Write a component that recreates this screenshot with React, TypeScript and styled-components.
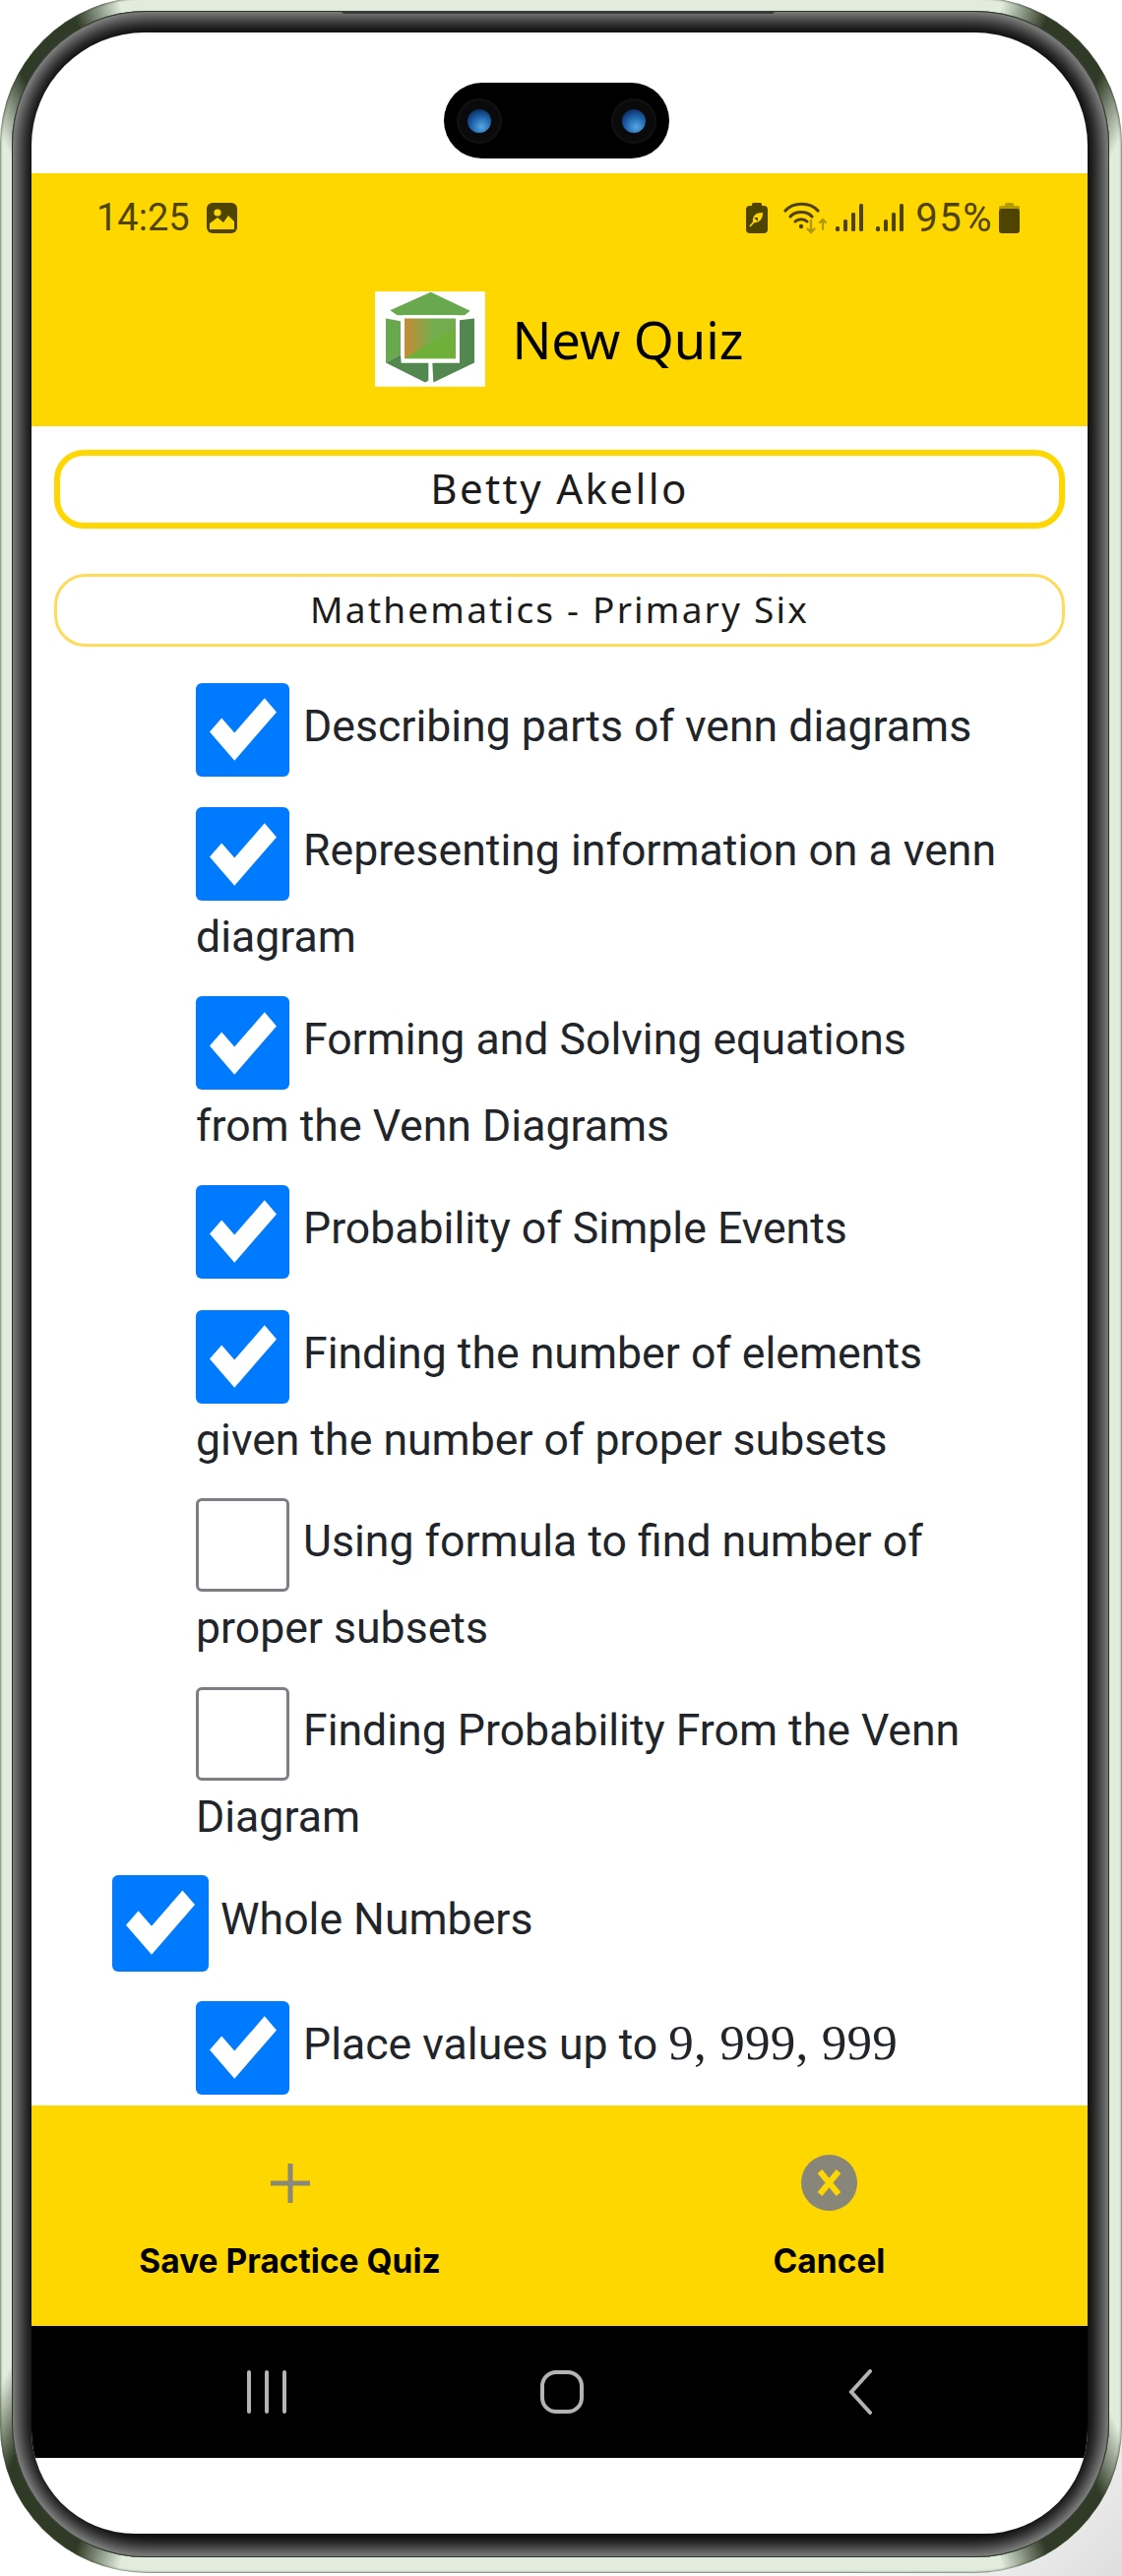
import styled, { createGlobalStyle } from 'styled-components';
import { ReactNode } from 'react';

const GlobalStyle = createGlobalStyle`
  html, body {
    margin: 0;
    padding: 0;
    background: #fff;
    overflow: hidden;
  }
`;

const YELLOW = '#ffd700';
const STATUS_INK = '#4f4300';

const Page = styled.div`
  width: 1140px;
  height: 2617px;
  overflow: hidden;
  background: linear-gradient(135deg, #fff 92%, #ddd 100%);
`;

const Rim = styled.div`
  box-sizing: border-box;
  width: 1140px;
  height: 2617px;
  margin-top: -3px;
  padding: 14px 13px 16px 12px;
  border-radius: 150px;
  background:
    conic-gradient(
      #e1ecdd 0deg 19deg,
      #2f3b26 21deg 24deg,
      #e1ecdd 26deg 154deg,
      #2f3b26 156deg 159deg,
      #e1ecdd 161deg 199deg,
      #2f3b26 201deg 205deg,
      #e1ecdd 207deg 334deg,
      #2f3b26 336deg 339deg,
      #e1ecdd 341deg 360deg
    );
  box-shadow: inset 0 0 2px 1px rgba(58, 70, 48, 0.65);
`;

const Bezel = styled.div`
  position: relative;
  box-sizing: border-box;
  height: 100%;
  padding: 22px 22px 24px 20px;
  border-radius: 136px;
  background: #000;
  box-shadow:
    inset 0 0 0 1px #2c3527,
    inset 0 0 24px 6px #bdbdbd;
`;

const Earpiece = styled.div`
  position: absolute;
  top: 0;
  left: 335px;
  width: 440px;
  height: 3px;
  border-radius: 0 0 3px 3px;
  background: #3a3a3a;
`;

const Screen = styled.div`
  display: flex;
  flex-direction: column;
  height: 100%;
  overflow: hidden;
  background: #fff;
  border-radius: 115px 115px 105px 105px;
`;

const TopInset = styled.div`
  display: flex;
  justify-content: center;
  flex: none;
  box-sizing: border-box;
  height: 143px;
  padding: 51px 6px 0 0;
`;

const CameraPill = styled.div`
  display: flex;
  justify-content: space-between;
  align-items: center;
  box-sizing: border-box;
  width: 229px;
  height: 77px;
  padding: 0 13px;
  border-radius: 39px;
  background: #000;
`;

const Lens = styled.div`
  position: relative;
  width: 46px;
  height: 46px;
  border-radius: 50%;
  background: radial-gradient(circle at 50% 50%, #0a0a0a 60%, #2b2b2b 100%);

  &::after {
    content: '';
    position: absolute;
    left: 11px;
    top: 11px;
    width: 24px;
    height: 24px;
    border-radius: 50%;
    background: radial-gradient(circle at 60% 75%, #59a7e4 0%, #1f63ab 45%, #0c2d63 80%);
  }
`;

const AppHeader = styled.header`
  flex: none;
  height: 257px;
  background: ${YELLOW};
`;

const StatusBar = styled.div`
  display: flex;
  justify-content: space-between;
  align-items: center;
  box-sizing: border-box;
  height: 90px;
  padding: 0 69px 0 66px;
  color: ${STATUS_INK};
  font-family: Roboto, sans-serif;
  font-size: 38px;
`;

const StatusGroup = styled.div`
  display: flex;
  align-items: center;
`;

const StatusSlot = styled.span<{ $left?: number }>`
  display: flex;
  margin-left: ${(p) => p.$left ?? 0}px;
`;

const Percent = styled.span`
  margin-left: 12px;
  margin-right: 6px;
  font-size: 40px;
  letter-spacing: 1.5px;
`;

const TitleRow = styled.div`
  display: flex;
  justify-content: center;
  align-items: center;
  gap: 27px;
  padding-top: 30px;
`;

const Title = styled.h1`
  margin: 0;
  color: #000;
  font-family: 'Noto Sans', sans-serif;
  font-size: 52.5px;
  font-weight: 400;
`;

const Content = styled.main`
  flex: 1;
  min-height: 0;
  overflow: hidden;
  box-sizing: border-box;
  padding: 24px 23px 0;
`;

const NamePill = styled.div<{ $thin?: boolean }>`
  box-sizing: border-box;
  height: ${(p) => (p.$thin ? 74 : 80)}px;
  margin-bottom: ${(p) => (p.$thin ? 31.5 : 46)}px;
  border: ${(p) => (p.$thin ? '3px solid #ffdb5c' : `6px solid ${YELLOW}`)};
  border-radius: ${(p) => (p.$thin ? 32 : 30)}px;
  color: #1c1c1c;
  font-family: 'Noto Sans', sans-serif;
  font-size: ${(p) => (p.$thin ? 37 : 42)}px;
  letter-spacing: ${(p) => (p.$thin ? 2.2 : 2.4)}px;
  line-height: 66px;
  text-align: center;
`;

const TopicList = styled.div`
  padding: 0 60px 0 59px;
`;

const TopicRow = styled.label<{ $top?: boolean }>`
  display: block;
  margin-bottom: 21.8px;
  margin-left: ${(p) => (p.$top ? 0 : 85)}px;
  color: #212529;
  font-family: Roboto, sans-serif;
  font-size: 44.6px;
  line-height: 65px;
`;

const Box = styled.span<{ $on: boolean; $top?: boolean }>`
  display: inline-flex;
  justify-content: center;
  align-items: center;
  box-sizing: border-box;
  width: ${(p) => (p.$top ? 98 : 95)}px;
  height: ${(p) => (p.$top ? 98 : 95)}px;
  margin: ${(p) => (p.$top ? 3.5 : 5)}px ${(p) => (p.$top ? 12 : 14)}px ${(p) => (p.$top ? 3.5 : 5)}px 0;
  border: ${(p) => (p.$on ? 'none' : '3px solid #7b7e82')};
  border-radius: 6px;
  background: ${(p) => (p.$on ? '#007bff' : '#fff')};
  vertical-align: middle;
`;

const MathRun = styled.span`
  font-family: 'Liberation Serif', serif;
  font-size: 51px;
  letter-spacing: 0.3px;
`;

const BottomBar = styled.footer`
  display: flex;
  justify-content: space-between;
  flex: none;
  height: 224px;
  background: ${YELLOW};
`;

const BottomAction = styled.button`
  display: flex;
  flex-direction: column;
  align-items: center;
  gap: 32px;
  width: 525px;
  height: 100%;
  padding: 50px 0 0;
  border: 0;
  background: none;
  color: #000;
  font-family: Inter, sans-serif;
  font-size: 33.5px;
  font-weight: 700;
  line-height: 38px;
`;

const ActionIcon = styled.span`
  display: flex;
  justify-content: center;
  align-items: center;
  height: 57px;
`;

const SystemNav = styled.nav`
  display: grid;
  grid-template-columns: 299px 313px 24px;
  align-items: center;
  flex: none;
  box-sizing: border-box;
  height: 134px;
  padding-left: 218px;
  background: #000;
`;

const BottomInset = styled.div`
  flex: none;
  height: 77px;
`;

function CheckMark({ big }: { big?: boolean }) {
  const scale = big ? 1.03 : 1;
  return (
    <svg width={68 * scale} height={78 * scale} viewBox="0 0 8 8" preserveAspectRatio="none">
      <path fill="#fff" d="M6.564.75l-3.59 3.612-1.538-1.55L0 4.26 2.974 7.25 8 2.193z" />
    </svg>
  );
}

function ImageIcon() {
  return (
    <svg width="31" height="31" viewBox="0 0 31 31">
      <rect width="31" height="31" rx="6" fill={STATUS_INK} />
      <circle cx="11" cy="10" r="3.6" fill={YELLOW} />
      <path d="M3 27 V21 L11 15 L17 20 L22 13 L28 19 V27 Z" fill={YELLOW} />
    </svg>
  );
}

function LeafBatteryIcon() {
  return (
    <svg width="22" height="31" viewBox="0 0 22 31">
      <rect x="6" width="10" height="4" rx="1.5" fill={STATUS_INK} />
      <rect y="3" width="22" height="28" rx="4" fill={STATUS_INK} />
      <path d="M17 10 C10 10 6 13 7 20 C13 21 17 17 17 10 Z" fill={YELLOW} />
      <path d="M4 24 L12 15" stroke={YELLOW} strokeWidth="1.6" />
      <path d="M8 15 L12 15 L12 19" fill={STATUS_INK} />
    </svg>
  );
}

function WifiIcon() {
  return (
    <svg width="44" height="33" viewBox="0 0 44 33" fill="none" strokeLinecap="round">
      <path d="M2 9 C10 0 27 0 35 9" stroke={STATUS_INK} strokeWidth="3.2" />
      <path d="M7 15 C12 9 24 9 29 15" stroke={STATUS_INK} strokeWidth="3.2" />
      <path d="M12 20 C15 17 21 17 24 20" stroke={STATUS_INK} strokeWidth="3" />
      <circle cx="18" cy="25" r="2.2" fill={STATUS_INK} />
      <path d="M28 19 V31 M24.5 27.5 L28 31 L31.5 27.5" stroke="#b09600" strokeWidth="2.4" />
      <path d="M40 18 V28 M37 21 L40 18 L43 21" stroke="#b09600" strokeWidth="2.2" />
    </svg>
  );
}

function SignalIcon() {
  return (
    <svg width="28" height="28" viewBox="0 0 28 28" fill={STATUS_INK}>
      <rect x="0" y="23" width="4" height="5" rx="1.5" />
      <rect x="8" y="16" width="4" height="12" rx="1.5" />
      <rect x="16" y="9" width="4" height="19" rx="1.5" />
      <rect x="24" y="0" width="4" height="28" rx="1.5" />
    </svg>
  );
}

function BatteryIcon() {
  return (
    <svg width="21" height="31" viewBox="0 0 21 31">
      <rect x="6" width="9" height="5" rx="1.5" fill="#b59a00" />
      <rect y="3" width="21" height="5" rx="2" fill="#b59a00" />
      <rect y="6" width="21" height="25" rx="3" fill={STATUS_INK} />
    </svg>
  );
}

function AppLogo() {
  return (
    <svg width="112" height="97" viewBox="0 0 336 290">
      <defs>
        <linearGradient id="logoFade" x1="0" x2="1" y1="0" y2="0">
          <stop offset="0" stopColor="#c98a35" />
          <stop offset="0.55" stopColor="#74ad4f" />
        </linearGradient>
      </defs>
      <rect width="336" height="290" fill="#fff" />
      <polygon points="170,2 290,59 273,72 68,72 46,57" fill="#6aa84f" />
      <polygon points="33,82 78,90 78,192 33,217" fill="#6aa84f" />
      <polygon points="33,217 78,192 80,218 163,218 163,272 153,277" fill="#52874f" />
      <polygon points="258,87 303,82 303,217 178,277 175,218 258,218" fill="#52874f" />
      <rect x="81" y="72" width="174" height="142" rx="8" fill="#fff" />
      <rect x="90" y="82" width="156" height="122" fill="url(#logoFade)" />
      <polygon points="90,204 246,108 246,204" fill="#6fb03a" />
    </svg>
  );
}

function PlusIcon() {
  return (
    <svg width="40" height="40" viewBox="0 0 40 40" fill="#8a8878">
      <rect x="17.5" width="5" height="40" />
      <rect y="17.5" width="40" height="5" />
    </svg>
  );
}

function CancelIcon() {
  return (
    <svg width="57" height="57" viewBox="0 0 57 57">
      <circle cx="28.5" cy="28.5" r="28.5" fill="#888678" />
      <path d="M19 17 L38 40 M38 17 L19 40" stroke={YELLOW} strokeWidth="6" />
    </svg>
  );
}

function NavRecents() {
  return (
    <svg width="42" height="44" viewBox="0 0 42 44" stroke="#b4b4b4" strokeWidth="4" strokeLinecap="round">
      <path d="M3 2 V42 M21 2 V42 M39 2 V42" />
    </svg>
  );
}

function NavHome() {
  return (
    <svg width="44" height="44" viewBox="0 0 44 44" fill="none" stroke="#b4b4b4" strokeWidth="4">
      <rect x="2" y="2" width="40" height="40" rx="14" />
    </svg>
  );
}

function NavBack() {
  return (
    <svg width="24" height="46" viewBox="0 0 24 46" fill="none" stroke="#b4b4b4" strokeWidth="4" strokeLinecap="round">
      <path d="M22 2 L3 23 L22 44" />
    </svg>
  );
}

type Topic = { label: ReactNode; checked: boolean; top?: boolean };

const TOPICS: Topic[] = [
  { label: 'Describing parts of venn diagrams', checked: true },
  { label: 'Representing information on a venn diagram', checked: true },
  { label: 'Forming and Solving equations from the Venn Diagrams', checked: true },
  { label: 'Probability of Simple Events', checked: true },
  { label: 'Finding the number of elements given the number of proper subsets', checked: true },
  { label: 'Using formula to find number of proper subsets', checked: false },
  { label: 'Finding Probability From the Venn Diagram', checked: false },
  { label: 'Whole Numbers', checked: true, top: true },
  {
    label: (
      <>
        Place values up to <MathRun>9, 999, 999</MathRun>
      </>
    ),
    checked: true,
  },
];

function App() {
  return (
    <Page>
      <GlobalStyle />
      <Rim>
        <Bezel>
          <Earpiece />
          <Screen>
            <TopInset>
              <CameraPill>
                <Lens />
                <Lens />
              </CameraPill>
            </TopInset>
            <AppHeader>
              <StatusBar>
                <StatusGroup>
                  <span>14:25</span>
                  <StatusSlot $left={17}>
                    <ImageIcon />
                  </StatusSlot>
                </StatusGroup>
                <StatusGroup>
                  <LeafBatteryIcon />
                  <StatusSlot $left={16}>
                    <WifiIcon />
                  </StatusSlot>
                  <StatusSlot $left={9}>
                    <SignalIcon />
                  </StatusSlot>
                  <StatusSlot $left={13}>
                    <SignalIcon />
                  </StatusSlot>
                  <Percent>95%</Percent>
                  <BatteryIcon />
                </StatusGroup>
              </StatusBar>
              <TitleRow>
                <AppLogo />
                <Title>New Quiz</Title>
              </TitleRow>
            </AppHeader>
            <Content>
              <NamePill>Betty Akello</NamePill>
              <NamePill $thin>Mathematics - Primary Six</NamePill>
              <TopicList>
                {TOPICS.map((topic, i) => (
                  <TopicRow key={i} $top={topic.top}>
                    <Box $on={topic.checked} $top={topic.top}>
                      {topic.checked && <CheckMark big={topic.top} />}
                    </Box>
                    {topic.label}
                  </TopicRow>
                ))}
              </TopicList>
            </Content>
            <BottomBar>
              <BottomAction>
                <ActionIcon>
                  <PlusIcon />
                </ActionIcon>
                Save Practice Quiz
              </BottomAction>
              <BottomAction>
                <ActionIcon>
                  <CancelIcon />
                </ActionIcon>
                Cancel
              </BottomAction>
            </BottomBar>
            <SystemNav>
              <NavRecents />
              <NavHome />
              <NavBack />
            </SystemNav>
            <BottomInset />
          </Screen>
        </Bezel>
      </Rim>
    </Page>
  );
}

export default App;
